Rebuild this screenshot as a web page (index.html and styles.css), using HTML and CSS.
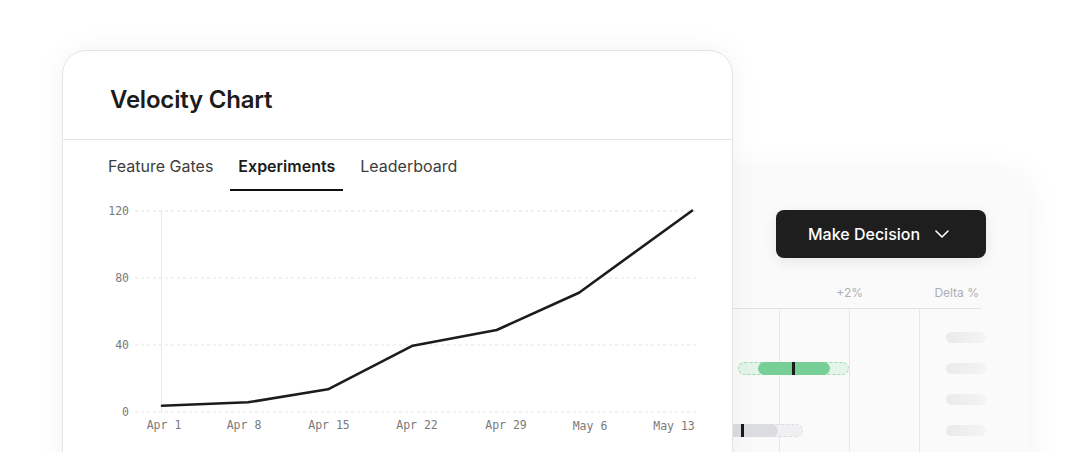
FILE: index.html
```html
<!DOCTYPE html>
<html lang="en">
<head>
    <meta charset="UTF-8">
    <meta name="viewport" content="width=device-width, initial-scale=1.0">
    <title>Velocity Chart</title>
    <link rel="stylesheet" href="styles.css">
</head>
<body>
    <div class="stage">
        <!-- results panel sits behind the chart card -->
        <div class="results">
            <button class="decision-btn">
                Make Decision
                <svg width="14" height="8" viewBox="0 0 14 8" fill="none">
                    <path d="M1 1l6 6 6-6" stroke="#fff" stroke-width="1.6" stroke-linecap="round" stroke-linejoin="round"/>
                </svg>
            </button>

            <div class="results-table">
                <div class="results-head">
                    <span class="head-plot">+2%</span>
                    <span class="head-delta">Delta %</span>
                </div>
                <div class="results-body">
                    <div class="result-row">
                        <div class="plot-cell"></div>
                        <div class="delta-cell"><span class="pill"></span></div>
                    </div>
                    <div class="result-row">
                        <div class="plot-cell">
                            <span class="range green" style="left: 138px; width: 111px;"></span>
                            <span class="interval green" style="left: 158px; width: 72px;"></span>
                            <span class="mark" style="left: 192px;"></span>
                        </div>
                        <div class="delta-cell"><span class="pill"></span></div>
                    </div>
                    <div class="result-row">
                        <div class="plot-cell"></div>
                        <div class="delta-cell"><span class="pill"></span></div>
                    </div>
                    <div class="result-row">
                        <div class="plot-cell">
                            <span class="range gray" style="left: 90px; width: 113px;"></span>
                            <span class="interval gray" style="left: 90px; width: 88px;"></span>
                            <span class="mark" style="left: 141px;"></span>
                        </div>
                        <div class="delta-cell"><span class="pill"></span></div>
                    </div>
                </div>
            </div>
        </div>

        <div class="card">
            <div class="card-header">
                <h1>Velocity Chart</h1>
            </div>
            <div class="tabs">
                <span class="tab">Feature Gates</span>
                <span class="tab active">Experiments</span>
                <span class="tab">Leaderboard</span>
            </div>

            <svg class="chart" width="669" height="261" viewBox="0 0 669 261">
                <g class="grid">
                    <line x1="72" y1="20" x2="634" y2="20"/>
                    <line x1="72" y1="87" x2="634" y2="87"/>
                    <line x1="72" y1="154" x2="634" y2="154"/>
                    <line x1="72" y1="221" x2="634" y2="221"/>
                </g>
                <line class="axis" x1="98.5" y1="20" x2="98.5" y2="221"/>
                <g class="y-labels">
                    <text x="66" y="20">120</text>
                    <text x="66" y="87">80</text>
                    <text x="66" y="154">40</text>
                    <text x="66" y="221">0</text>
                </g>
                <g class="x-labels">
                    <text x="101" y="234">Apr 1</text>
                    <text x="181" y="234">Apr 8</text>
                    <text x="266" y="234">Apr 15</text>
                    <text x="354" y="234">Apr 22</text>
                    <text x="443" y="234">Apr 29</text>
                    <text x="527" y="235">May 6</text>
                    <text x="611" y="235">May 13</text>
                </g>
                <polyline class="line" points="99,214.7 185,211.3 265,198.3 349.7,154.7 433.7,139 516,101.7 629,19.7"/>
            </svg>
        </div>
    </div>
</body>
</html>
```

FILE: styles.css
```css
:root {
    --text-color: #1c1c1c;
    --muted-color: #3d3d3d;
    --border-color: #e4e4e4;
    --axis-color: #7a7a7a;
    --head-color: #abafb7;
}

* {
    box-sizing: border-box;
    margin: 0;
    padding: 0;
}

body {
    background: #fff;
    font-family: 'Inter', 'Noto Sans', sans-serif;
    color: var(--text-color);
    overflow: hidden;
}

.stage {
    position: relative;
    width: 1087px;
    height: 452px;
    padding: 50px 0 0 62px;
}

/* chart card */

.card {
    position: relative;
    width: 671px;
    height: 440px;
    background: #fff;
    border: 1px solid var(--border-color);
    border-radius: 24px;
    box-shadow: 0 0 30px rgba(0, 0, 0, 0.05);
}

.card-header {
    padding: 35px 47px 26px;
    border-bottom: 1px solid var(--border-color);
}

h1 {
    font-size: 24px;
    line-height: 27px;
    font-weight: 600;
    letter-spacing: -0.2px;
}

.tabs {
    display: flex;
    gap: 9px;
    padding: 0 37px;
}

.tab {
    padding: 16px 8px 13px;
    font-size: 16px;
    line-height: 20px;
    color: var(--muted-color);
    border-bottom: 2px solid transparent;
}

.tab.active {
    font-weight: 600;
    color: var(--text-color);
    border-bottom-color: #111;
}

.chart {
    display: block;
}

.chart .grid line {
    stroke: #e3e3e3;
    stroke-width: 1;
    stroke-dasharray: 3 3;
}

.chart .axis {
    stroke: #e8e8e8;
    stroke-width: 1;
}

.chart text {
    font-family: 'DejaVu Sans Mono', monospace;
    font-size: 11.5px;
    fill: var(--axis-color);
    dominant-baseline: middle;
}

.y-labels text {
    text-anchor: end;
}

.x-labels text {
    text-anchor: middle;
}

.chart .line {
    fill: none;
    stroke: #1c1c1c;
    stroke-width: 2.6;
    stroke-linejoin: round;
    stroke-linecap: round;
}

/* results panel */

.results {
    position: absolute;
    left: 600px;
    top: 170px;
    width: 428px;
    height: 320px;
    padding-top: 40px;
    background: #fafafa;
    border-radius: 24px;
    box-shadow: 0 4px 36px rgba(0, 0, 0, 0.06);
    display: flex;
    flex-direction: column;
}

.decision-btn {
    align-self: flex-end;
    margin-right: 42px;
    width: 210px;
    height: 48px;
    display: flex;
    align-items: center;
    gap: 15px;
    padding-left: 32px;
    background: #1e1e1e;
    color: #fff;
    border: none;
    border-radius: 8px;
    font-family: inherit;
    font-size: 16px;
    font-weight: 500;
    box-shadow: 0 4px 14px rgba(0, 0, 0, 0.08);
}

.results-table {
    width: 381px;
    margin-top: 25px;
}

.results-head {
    display: grid;
    grid-template-columns: 320px 61px;
    align-items: end;
    height: 26px;
    padding-bottom: 7px;
    border-bottom: 1px solid #e3e3e6;
    font-size: 12px;
    line-height: 16px;
    color: var(--head-color);
}

.head-plot {
    text-align: right;
    padding-right: 57px;
}

.head-delta {
    text-align: right;
    padding-right: 2px;
}

.results-body {
    padding-top: 13px;
    height: 160px;
    background-image: repeating-linear-gradient(90deg, transparent 0 39px, #e6e6e8 39px 40px, transparent 40px 70px);
    background-size: 320px 100%;
    background-repeat: no-repeat;
}

.result-row {
    display: grid;
    grid-template-columns: 320px 61px;
    height: 31px;
}

.plot-cell {
    position: relative;
}

.range,
.interval,
.mark {
    position: absolute;
    top: 9px;
    height: 13px;
}

.range {
    border-radius: 7px;
    border: 1px dashed;
}

.range.green {
    background: #e3f4e8;
    border-color: #9fdab1;
}

.range.gray {
    background: #f0f0f2;
    border-color: #dcdde0;
}

.interval {
    border-radius: 7px;
}

.interval.green {
    background: #76cf97;
}

.interval.gray {
    background: #dcdde1;
}

.mark {
    width: 3px;
    background: #1a1a1a;
}

.delta-cell {
    display: flex;
    align-items: center;
    padding-left: 26px;
}

.pill {
    flex: none;
    width: 40px;
    height: 11px;
    border-radius: 6px;
    background: linear-gradient(90deg, #eaeaec, #f4f4f5);
}
```
